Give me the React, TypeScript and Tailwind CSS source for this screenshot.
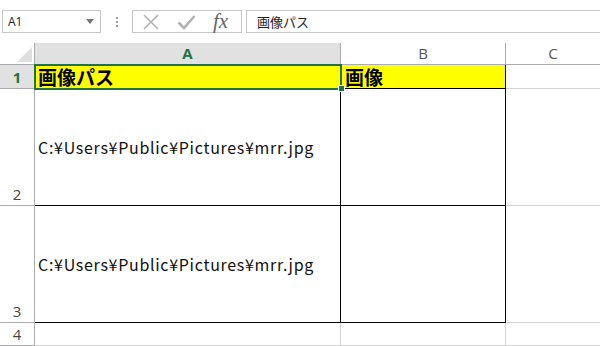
import React from 'react';

const jp = { fontFamily: '"Noto Sans CJK JP", "Noto Sans", sans-serif' };
const ui = { fontFamily: '"Open Sans", "Noto Sans", sans-serif' };

function Toolbar() {
  return (
    <div className="flex h-[43px] items-start pt-[10px] bg-white">
      {/* Name box */}
      <div className="ml-[2px] flex h-[23px] w-[99px] items-center justify-between border border-[#c6c6c6] pl-[5px] pr-[6px]">
        <span className="text-[12px] text-[#222]" style={ui}>A1</span>
        <svg width="8" height="5" viewBox="0 0 8 5"><path d="M0 0h8L4 5z" fill="#777" /></svg>
      </div>
      {/* grip */}
      <div className="ml-[14px] flex h-[23px] w-[3px] flex-col items-center justify-center gap-[2px]">
        <span className="h-[2px] w-[2px] bg-[#9a9a9a]" />
        <span className="h-[2px] w-[2px] bg-[#9a9a9a]" />
        <span className="h-[2px] w-[2px] bg-[#9a9a9a]" />
      </div>
      {/* buttons */}
      <div className="ml-[14px] flex h-[23px] w-[110px] items-center border border-[#c6c6c6]">
        <svg className="ml-[9px]" width="18" height="18" viewBox="0 0 18 18">
          <path d="M2 2l14 14M16 2L2 16" stroke="#b3b3b3" strokeWidth="1.6" />
        </svg>
        <svg className="ml-[17px]" width="19" height="16" viewBox="0 0 19 16">
          <path d="M1.5 8.5l5.5 5.5L17.5 2" stroke="#b3b3b3" strokeWidth="2.6" fill="none" />
        </svg>
        <span
          className="ml-[17px] text-[21px] italic leading-none text-[#666]"
          style={{ fontFamily: '"Liberation Serif", serif' }}
        >
          fx
        </span>
      </div>
      {/* formula bar */}
      <div className="ml-[4px] flex h-[23px] flex-1 items-center border-y border-l border-[#c6c6c6] pl-[10px]">
        <span className="text-[13px] text-[#222]" style={jp}>画像パス</span>
      </div>
    </div>
  );
}

function RowHead({ n, active }: { n: string; active?: boolean }) {
  return (
    <div
      className={`flex items-end justify-center border-r border-b border-[#ababab] pb-[1px] text-[15px] leading-[20px] ${
        active ? 'bg-[#e1e1e1] font-bold text-[#217346]' : 'bg-white text-[#444]'
      }`}
      style={ui}
    >
      {n}
    </div>
  );
}

function PathCell() {
  return (
    <div className="flex items-center border-r border-b border-black bg-white pl-[3px]">
      <span className="text-[16px] tracking-[0.7px] text-[#111]" style={jp}>
        C:¥Users¥Public¥Pictures¥mrr.jpg
      </span>
    </div>
  );
}

export default function App() {
  return (
    <div className="h-[346px] w-[600px] overflow-hidden bg-white">
      <Toolbar />
      <div className="grid grid-cols-[35px_306px_165px_94px] grid-rows-[22px_24px_117px_117px_23px]">
        {/* header row */}
        <div className="relative border-r border-b border-[#ababab] bg-white">
          <svg className="absolute right-[2px] bottom-[2px]" width="15" height="15" viewBox="0 0 15 15">
            <path d="M15 0V15H0z" fill="#dfdfdf" />
          </svg>
        </div>
        <div
          className="flex items-center justify-center border-r border-b border-[#ababab] bg-[#e1e1e1] text-[15px] font-bold text-[#217346]"
          style={ui}
        >
          A
        </div>
        <div className="flex items-center justify-center border-r border-b border-[#ababab] bg-white text-[15px] text-[#555]" style={ui}>
          B
        </div>
        <div className="flex items-center justify-center border-b border-[#ababab] bg-white text-[15px] text-[#555]" style={ui}>
          C
        </div>

        {/* row 1 */}
        <RowHead n="1" active />
        <div className="relative flex items-end bg-[#ffff00] pl-[3px] outline-2 -outline-offset-1 outline-[#217346] border-b border-black">
          <span className="text-[19px] font-bold leading-[22px] text-black" style={jp}>画像パス</span>
          <span className="absolute -right-[4px] -bottom-[4px] z-10 h-[7px] w-[7px] border border-white bg-[#217346]" />
        </div>
        <div className="flex items-end border-r border-b border-black bg-[#ffff00] pl-[4px]">
          <span className="text-[19px] font-bold leading-[22px] text-black" style={jp}>画像</span>
        </div>
        <div className="border-b border-[#d4d4d4]" />

        {/* row 2 */}
        <RowHead n="2" />
        <PathCell />
        <div className="border-r border-b border-black" />
        <div className="border-b border-[#d4d4d4]" />

        {/* row 3 */}
        <RowHead n="3" />
        <PathCell />
        <div className="border-r border-b border-black" />
        <div className="border-b border-[#d4d4d4]" />

        {/* row 4 */}
        <RowHead n="4" />
        <div className="border-r border-b border-[#d4d4d4]" />
        <div className="border-r border-b border-[#d4d4d4]" />
        <div className="border-b border-[#d4d4d4]" />
      </div>
    </div>
  );
}
